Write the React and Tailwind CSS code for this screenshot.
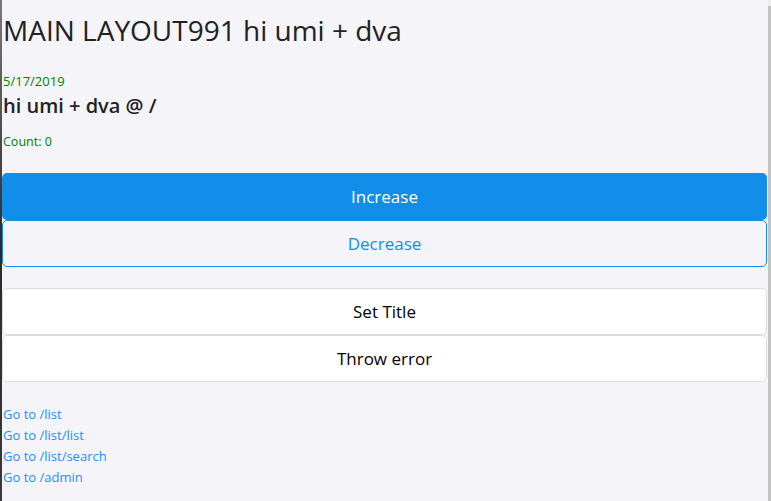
export default function App() {
  const font = { fontFamily: '"Open Sans", "Noto Sans", sans-serif' };
  return (
    <div className="flex h-[501px] w-[771px] overflow-hidden bg-[#f5f5f9]" style={font}>
      <div className="w-[2px] shrink-0 bg-gradient-to-b from-[#7a7a7a] via-[#2a2a2a] to-[#3a3a3a]" />
      <div className="flex min-w-0 flex-1 flex-col pr-[1px]">
        <h1 className="mt-[12px] pl-[1px] text-[28px] leading-[36px] font-medium text-[#222]">
          MAIN LAYOUT991 hi umi + dva
        </h1>
        <div className="mt-[24px] pl-[1px] text-[13px] leading-[18px] text-[#008000]">5/17/2019</div>
        <h2 className="mt-[3px] pl-[1px] text-[20px] leading-[26px] font-semibold text-[#222]">
          hi umi + dva @ /
        </h2>
        <div className="mt-[15px] pl-[1px] text-[12.5px] leading-[16px] text-[#008000]">Count: 0</div>
        <div className="mt-[23px] flex flex-col">
          <button className="h-[47px] rounded-[5px] bg-[#108ee9] text-[17px] text-white">Increase</button>
          <button className="h-[47px] rounded-[5px] border border-[#108ee9] bg-transparent text-[17px] text-[#108ee9]">
            Decrease
          </button>
        </div>
        <div className="mt-[21px] flex flex-col">
          <button className="h-[47px] rounded-[5px] border border-[#dddddd] bg-white text-[17px] text-black">
            Set Title
          </button>
          <button className="h-[47px] rounded-[5px] border border-[#dddddd] bg-white text-[17px] text-black">
            Throw error
          </button>
        </div>
        <div className="mt-[22px] flex flex-col pl-[1px] text-[13px] leading-[21px] text-[#1890ff]">
          <a>Go to /list</a>
          <a>Go to /list/list</a>
          <a>Go to /list/search</a>
          <a>Go to /admin</a>
        </div>
      </div>
      <div className="flex w-[3px] shrink-0 flex-col">
        <div className="h-[6px] bg-[#ececec]" />
        <div className="flex-1 bg-[#c2c2c2]" />
      </div>
    </div>
  );
}
